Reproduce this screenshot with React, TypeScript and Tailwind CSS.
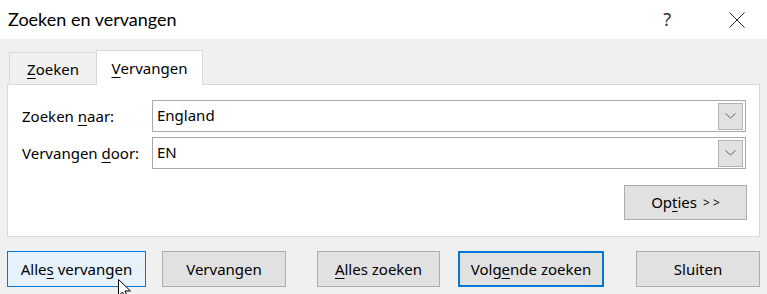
import React from "react";

const font = { fontFamily: '"Noto Sans", "Segoe UI", sans-serif' };

function U({ children }: { children: React.ReactNode }) {
  return <span className="underline decoration-1 underline-offset-[3px]">{children}</span>;
}

function Combo({ value }: { value: string }) {
  return (
    <div className="flex h-[32px] w-[594px] items-center border border-[#a9a9a9] bg-white pl-[4px] pr-[2px]">
      <span className="-mt-[2px] flex-1 text-[15px] leading-none text-black">{value}</span>
      <div className="flex h-[27px] w-[25px] items-center justify-center border border-[#b4b4b4] bg-[#e1e1e1]">
        <svg width="11" height="6" viewBox="0 0 11 6">
          <path d="M0.5 0.5 L5.5 5 L10.5 0.5" fill="none" stroke="#606060" strokeWidth="1" />
        </svg>
      </div>
    </div>
  );
}

function Btn({
  children,
  w,
  variant = "normal",
}: {
  children: React.ReactNode;
  w: string;
  variant?: "normal" | "hover" | "default";
}) {
  const cls =
    variant === "hover"
      ? "border border-[#0078d7] bg-[#e5f1fb]"
      : variant === "default"
        ? "border-2 border-[#0078d7] bg-[#e1e1e1]"
        : "border border-[#adadad] bg-[#e1e1e1]";
  return (
    <div className={`flex h-[36px] items-center justify-center text-[15px] text-black ${w} ${cls}`}>
      {children}
    </div>
  );
}

export default function App() {
  return (
    <div className="relative h-[294px] w-[767px] overflow-hidden bg-[#f0f0f0]" style={font}>
      {/* title bar */}
      <div className="flex h-[39px] items-center bg-white pl-[8px] pr-[22px]">
        <span className="flex-1 text-[18px] text-black" style={{ fontFamily: "Lato, sans-serif" }}>
          Zoeken en vervangen
        </span>
        <span className="mr-[58px] text-[18px] text-[#333]">?</span>
        <svg width="16" height="16" viewBox="0 0 16 16">
          <path d="M0.5 0.5 L15.5 15.5 M15.5 0.5 L0.5 15.5" stroke="#222" strokeWidth="1" />
        </svg>
      </div>

      {/* tabs + panel */}
      <div className="px-[7px] pt-[12px]">
        <div className="flex h-[33px] items-end pl-[2px]">
          <div className="flex h-[32px] w-[87px] items-center justify-center border-l border-t border-[#d9d9d9] pt-[2px] text-[15px] text-black">
            <U>Z</U>oeken
          </div>
          <div className="relative z-10 -mb-px flex h-[35px] w-[107px] items-center justify-center border border-b-0 border-[#d9d9d9] bg-white text-[15px] text-black">
            <U>V</U>ervangen
          </div>
        </div>
        <div className="flex h-[153px] flex-col border border-[#d9d9d9] bg-white pl-[14px] pr-[10px] pt-[15px]">
          <div className="flex items-center">
            <span className="w-[130px] text-[15px] text-black">
              Zoeken <U>n</U>aar:
            </span>
            <Combo value="England" />
          </div>
          <div className="mt-[5px] flex items-center">
            <span className="w-[130px] text-[15px] text-black">
              Vervangen <U>d</U>oor:
            </span>
            <Combo value="EN" />
          </div>
          <div className="mt-[16px] flex justify-end pr-[2px]">
            <div className="flex h-[35px] w-[123px] items-center justify-center border border-[#adadad] bg-[#e1e1e1] text-[15px] text-black">
              Op<U>t</U>ies <span className="ml-[6px] text-[12px]">&gt; &gt;</span>
            </div>
          </div>
        </div>
      </div>

      {/* bottom buttons */}
      <div className="mt-[14px] flex pl-[7px]">
        <Btn w="w-[139px]" variant="hover">
          Alle<U>s</U>&nbsp;vervangen
        </Btn>
        <div className="ml-[16px]">
          <Btn w="w-[124px]">Vervangen</Btn>
        </div>
        <div className="ml-[31px]">
          <Btn w="w-[123px]">
            <U>A</U>lles zoeken
          </Btn>
        </div>
        <div className="ml-[18px]">
          <Btn w="w-[146px]" variant="default">
            Volg<U>e</U>nde zoeken
          </Btn>
        </div>
        <div className="ml-[32px]">
          <Btn w="w-[124px]">Sluiten</Btn>
        </div>
      </div>

      {/* mouse pointer */}
      <svg className="absolute left-[118px] top-[279px]" width="20" height="24" viewBox="0 0 20 24">
        <path
          d="M0.5 0.5 L0.5 17 L4.5 13 L7.5 20 L10 19 L7 12 L12.5 12 Z"
          fill="white"
          stroke="black"
          strokeWidth="1"
        />
      </svg>
    </div>
  );
}
